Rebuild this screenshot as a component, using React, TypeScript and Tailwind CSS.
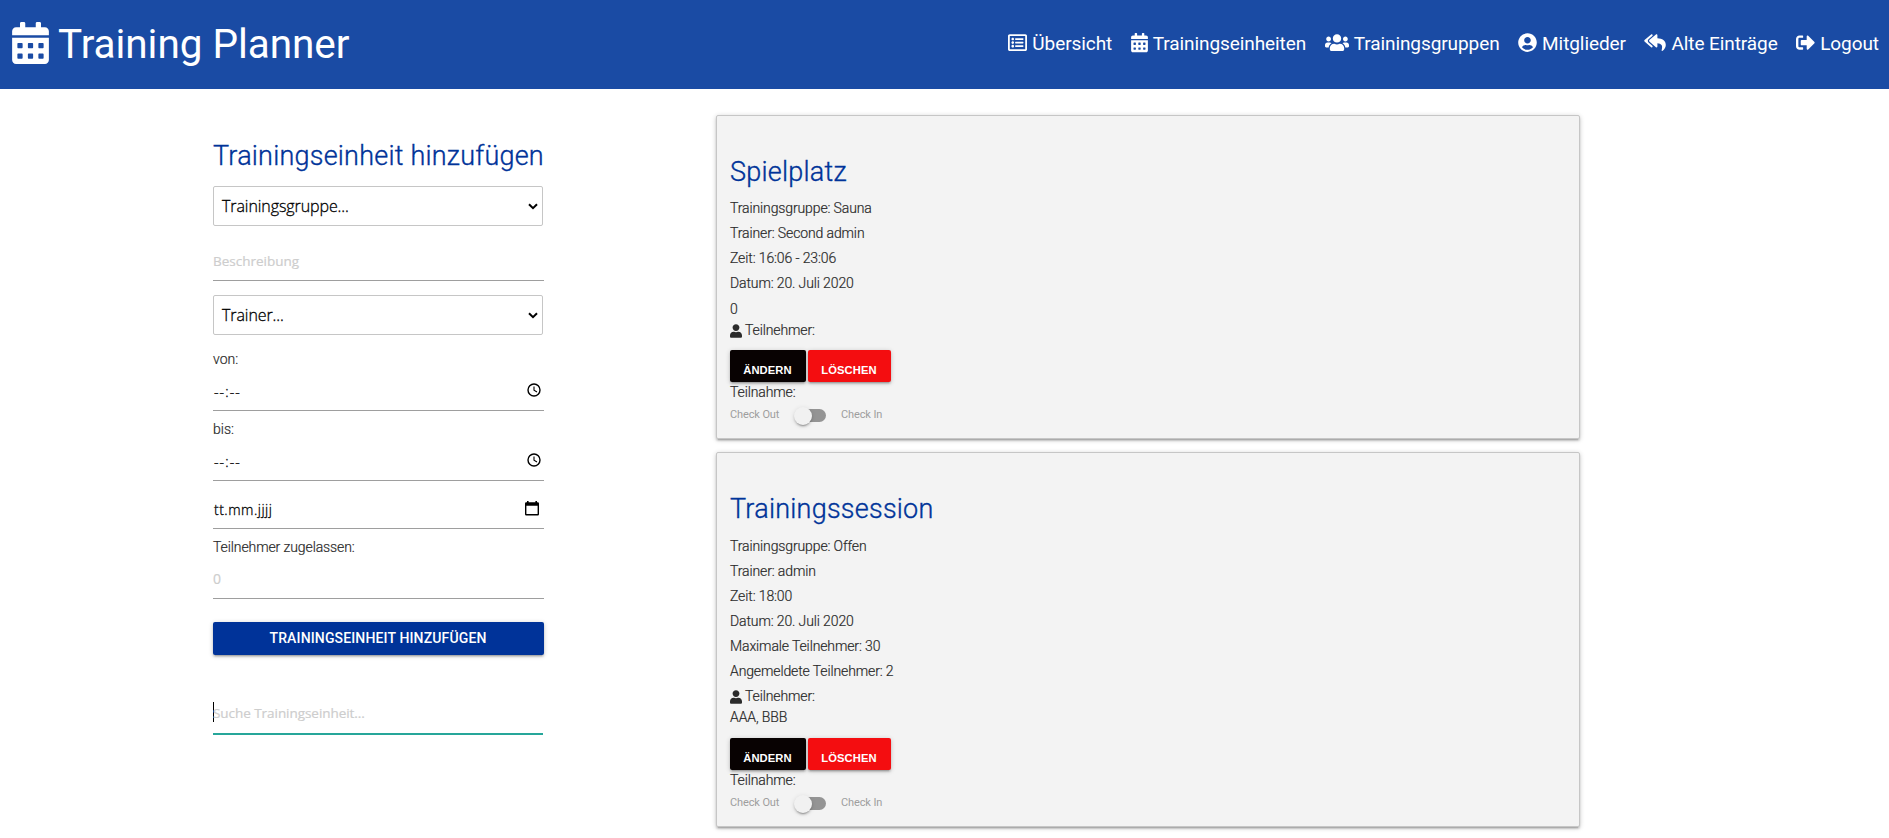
import type { ReactNode } from "react";
import {
  FaCalendarAlt,
  FaRegListAlt,
  FaReplyAll,
  FaSignOutAlt,
  FaUser,
  FaUserCircle,
  FaUsers,
} from "react-icons/fa";

const navItems = [
  { icon: FaRegListAlt, label: "Übersicht", size: "w-[19px]" },
  { icon: FaCalendarAlt, label: "Trainingseinheiten", size: "w-[17px]" },
  { icon: FaUsers, label: "Trainingsgruppen", size: "w-[24px]" },
  { icon: FaUserCircle, label: "Mitglieder", size: "w-[19px]" },
  { icon: FaReplyAll, label: "Alte Einträge", size: "w-[22px]" },
  { icon: FaSignOutAlt, label: "Logout", size: "w-[19px]" },
];

function Header() {
  return (
    <header className="flex h-[89px] items-center justify-between bg-[#1a4ba4] pb-[3px] pl-[12px] pr-[10px] font-normal text-white">
      <h1 className="flex items-center gap-[9px] text-[40.5px] leading-[50px] tracking-[-0.05px]">
        <FaCalendarAlt className="h-[42px] w-[37px]" />
        <span className="pt-[2px]">Training Planner</span>
      </h1>
      <nav className="flex items-center gap-[18.5px] text-[19px] leading-[24px] tracking-[-0.08px]">
        {navItems.map(({ icon: Icon, label, size }) => (
          <a key={label} className="flex items-center gap-[5px]">
            <Icon className={`h-[19.2px] shrink-0 ${size}`} />
            <span className="pt-[2px]">{label}</span>
          </a>
        ))}
      </nav>
    </header>
  );
}

function SelectBox({ children }: { children: ReactNode }) {
  return (
    <div className="flex h-[40px] w-[330px] items-center justify-between rounded-[2px] border border-[#c6c6c6] bg-white pl-[8px] pr-[4px] font-['Open_Sans',sans-serif] text-[16px] font-light tracking-[-0.08px] text-black [-webkit-text-stroke:0.3px]">
      <span>{children}</span>
      <svg className="h-[7px] w-[10px]" viewBox="0 0 10 7" fill="none" stroke="#000" strokeWidth="2">
        <path d="M1 1.2 5 5.2 9 1.2" />
      </svg>
    </div>
  );
}

function ClockIcon() {
  return (
    <svg className="mr-[3px] h-[14px] w-[14px]" viewBox="0 0 14 14" fill="none" stroke="#000" strokeWidth="1.4">
      <circle cx="7" cy="7" r="6" />
      <path d="M7 3.4V7.3L10 9" strokeWidth="1.1" />
    </svg>
  );
}

function CalendarIcon() {
  return (
    <svg className="mr-[5px] h-[15px] w-[14px]" viewBox="0 0 14 15">
      <path
        fill="#000"
        fillRule="evenodd"
        d="M2 0h1.6v1.3h6.8V0H12v1.3h.7q1.3 0 1.3 1.3v10.6q0 1.3-1.3 1.3H1.3Q0 14.500 0 13.200V2.600Q0 1.300 1.300 1.300H2zM1.400 4.800v8.300h11.200V4.800z"
      />
    </svg>
  );
}

function TimeField({ label, className }: { label: string; className: string }) {
  return (
    <label className={`block h-[70px] border-b border-[#9e9e9e] ${className}`}>
      <span className="block h-[28px] leading-[21px]">{label}</span>
      <span className="flex h-[26px] items-center justify-between font-['Open_Sans',sans-serif] text-[14px] font-light tracking-[1.1px] text-black [-webkit-text-stroke:0.3px]">
        <span className="pl-[1px] pt-[3px]">--:--</span>
        <ClockIcon />
      </span>
    </label>
  );
}

function TrainingForm() {
  return (
    <form className="w-[331px] pt-[49px]">
      <h2 className="h-[48px] whitespace-nowrap text-[27px] leading-[37px] tracking-[0.22px] text-[#003399] [-webkit-text-stroke:0.35px]">
        Trainingseinheit hinzufügen
      </h2>
      <SelectBox>Trainingsgruppe...</SelectBox>
      <div className="flex h-[55px] items-end border-b border-[#9e9e9e] pb-[9px] font-['Open_Sans',sans-serif] text-[13.5px] font-normal leading-[20px] text-[#cdcdcd]">
        Beschreibung
      </div>
      <div className="h-[14px]" />
      <SelectBox>Trainer...</SelectBox>
      <div className="pt-[6px]">
        <TimeField className="pt-[8px]" label="von:" />
        <TimeField className="pt-[8px]" label="bis:" />
      </div>
      <div className="flex h-[48px] items-center justify-between border-b border-[#9e9e9e] pt-[8px] font-['Open_Sans',sans-serif] text-[14px] font-light tracking-[0.5px] text-black [-webkit-text-stroke:0.3px]">
        <span className="pl-[1px] pt-[2px]">tt.mm.jjjj</span>
        <CalendarIcon />
      </div>
      <div className="h-[70px] border-b border-[#9e9e9e] pt-[8px]">
        <div className="leading-[21px] tracking-[-0.1px]">Teilnehmer zugelassen:</div>
        <div className="mt-[10px] font-['Open_Sans',sans-serif] text-[14px] font-normal leading-[22px] text-[#cdcdcd]">
          0
        </div>
      </div>
      <button
        type="button"
        className="mt-[23px] block h-[33px] w-[331px] rounded-[2px] bg-[#003399] pr-px text-[14px] font-medium leading-[33px] tracking-[0.14px] text-white shadow-[0_2px_2px_0_rgba(0,0,0,0.14),0_3px_1px_-2px_rgba(0,0,0,0.12),0_1px_5px_0_rgba(0,0,0,0.2)] [-webkit-text-stroke:0]"
      >
        TRAININGSEINHEIT HINZUFÜGEN
      </button>
      <div className="mt-[47px] flex h-[33px] w-[330px] items-start border-b-2 border-[#26a69a] font-['Open_Sans',sans-serif] text-[13.5px] font-normal leading-[22px] tracking-[-0.05px] text-[#cdcdcd]">
        <span className="h-[20px] w-px bg-black" />
        <span className="-ml-px">Suche Trainingseinheit...</span>
      </div>
    </form>
  );
}

function CardButton({ children, className }: { children: ReactNode; className: string }) {
  return (
    <button
      type="button"
      className={`h-[32px] rounded-[2px] pr-px pt-[8px] text-center font-['Liberation_Sans',Arial,sans-serif] text-[11.2px] font-bold leading-[24px] tracking-[0.1px] text-white shadow-[0_2px_2px_0_rgba(0,0,0,0.14),0_3px_1px_-2px_rgba(0,0,0,0.12),0_1px_5px_0_rgba(0,0,0,0.2)] [-webkit-text-stroke:0] ${className}`}
    >
      {children}
    </button>
  );
}

function Switch() {
  return (
    <div className="flex h-[25px] items-center text-[11px] font-normal leading-[20px] text-[#9e9e9e] [-webkit-text-stroke:0]">
      <span className="w-[64px] pb-[1px]">Check Out</span>
      <span className="flex h-[13px] w-[32px] items-center rounded-full bg-[linear-gradient(to_right,transparent_8px,#949494_8px)]">
        <span className="h-[18px] w-[18px] rounded-full bg-[#f1f1f1] shadow-[0_3px_1px_-2px_rgba(0,0,0,0.2),0_2px_2px_0_rgba(0,0,0,0.14),0_1px_5px_0_rgba(0,0,0,0.12)]" />
      </span>
      <span className="pb-[1px] pl-[15px]">Check In</span>
    </div>
  );
}

interface CardProps {
  title: string;
  lines: string[];
  count?: string;
  names?: string;
  className: string;
  titleClassName: string;
}

function TrainingCard({ title, lines, count, names, className, titleClassName }: CardProps) {
  return (
    <article
      className={`w-[864px] rounded-[2px] border border-[#c6c6c6] bg-[#f3f3f3] pl-[13px] tracking-[-0.12px] shadow-[0_2px_2px_0_rgba(0,0,0,0.14),0_3px_1px_-2px_rgba(0,0,0,0.12),0_1px_5px_0_rgba(0,0,0,0.2)] ${className}`}
    >
      <h2
        className={`pt-[38px] text-[27px] leading-[37px] tracking-[0.24px] text-[#003399] [-webkit-text-stroke:0.35px] ${titleClassName}`}
      >
        {title}
      </h2>
      {lines.map((line) => (
        <p key={line} className="leading-[25px]">
          {line}
        </p>
      ))}
      <div className="mt-[2px] leading-[21px]">
        {count && <p className="pt-[1px]">{count}</p>}
        <p className="flex items-center gap-[3px]">
          <FaUser className="h-[14px] w-[12px]" />
          Teilnehmer:
        </p>
        {names && <p className="pb-[1px]">{names}</p>}
      </div>
      <div className="mt-[9px] flex gap-[2px]">
        <CardButton className="w-[76px] bg-[#080202]">ÄNDERN</CardButton>
        <CardButton className="w-[83px] bg-[#f40d10]">LÖSCHEN</CardButton>
      </div>
      <p className="leading-[21px]">Teilnahme:</p>
      <Switch />
    </article>
  );
}

export default function App() {
  return (
    <div className="h-[838px] overflow-hidden bg-white font-['Roboto',sans-serif] text-[14px] font-light text-[#2b2b2b]">
      <Header />
      <main className="flex pl-[213px] [-webkit-text-stroke:0.2px]">
        <TrainingForm />
        <section className="ml-[172px] flex flex-col gap-[13px] pt-[26px]">
          <TrainingCard
            className="h-[324px]"
            titleClassName="h-[80px]"
            title="Spielplatz"
            lines={["Trainingsgruppe: Sauna", "Trainer: Second admin", "Zeit: 16:06 - 23:06", "Datum: 20. Juli 2020"]}
            count="0"
          />
          <TrainingCard
            className="h-[375px]"
            titleClassName="h-[81px]"
            title="Trainingssession"
            lines={[
              "Trainingsgruppe: Offen",
              "Trainer: admin",
              "Zeit: 18:00",
              "Datum: 20. Juli 2020",
              "Maximale Teilnehmer: 30",
              "Angemeldete Teilnehmer: 2",
            ]}
            names="AAA, BBB"
          />
        </section>
      </main>
    </div>
  );
}
